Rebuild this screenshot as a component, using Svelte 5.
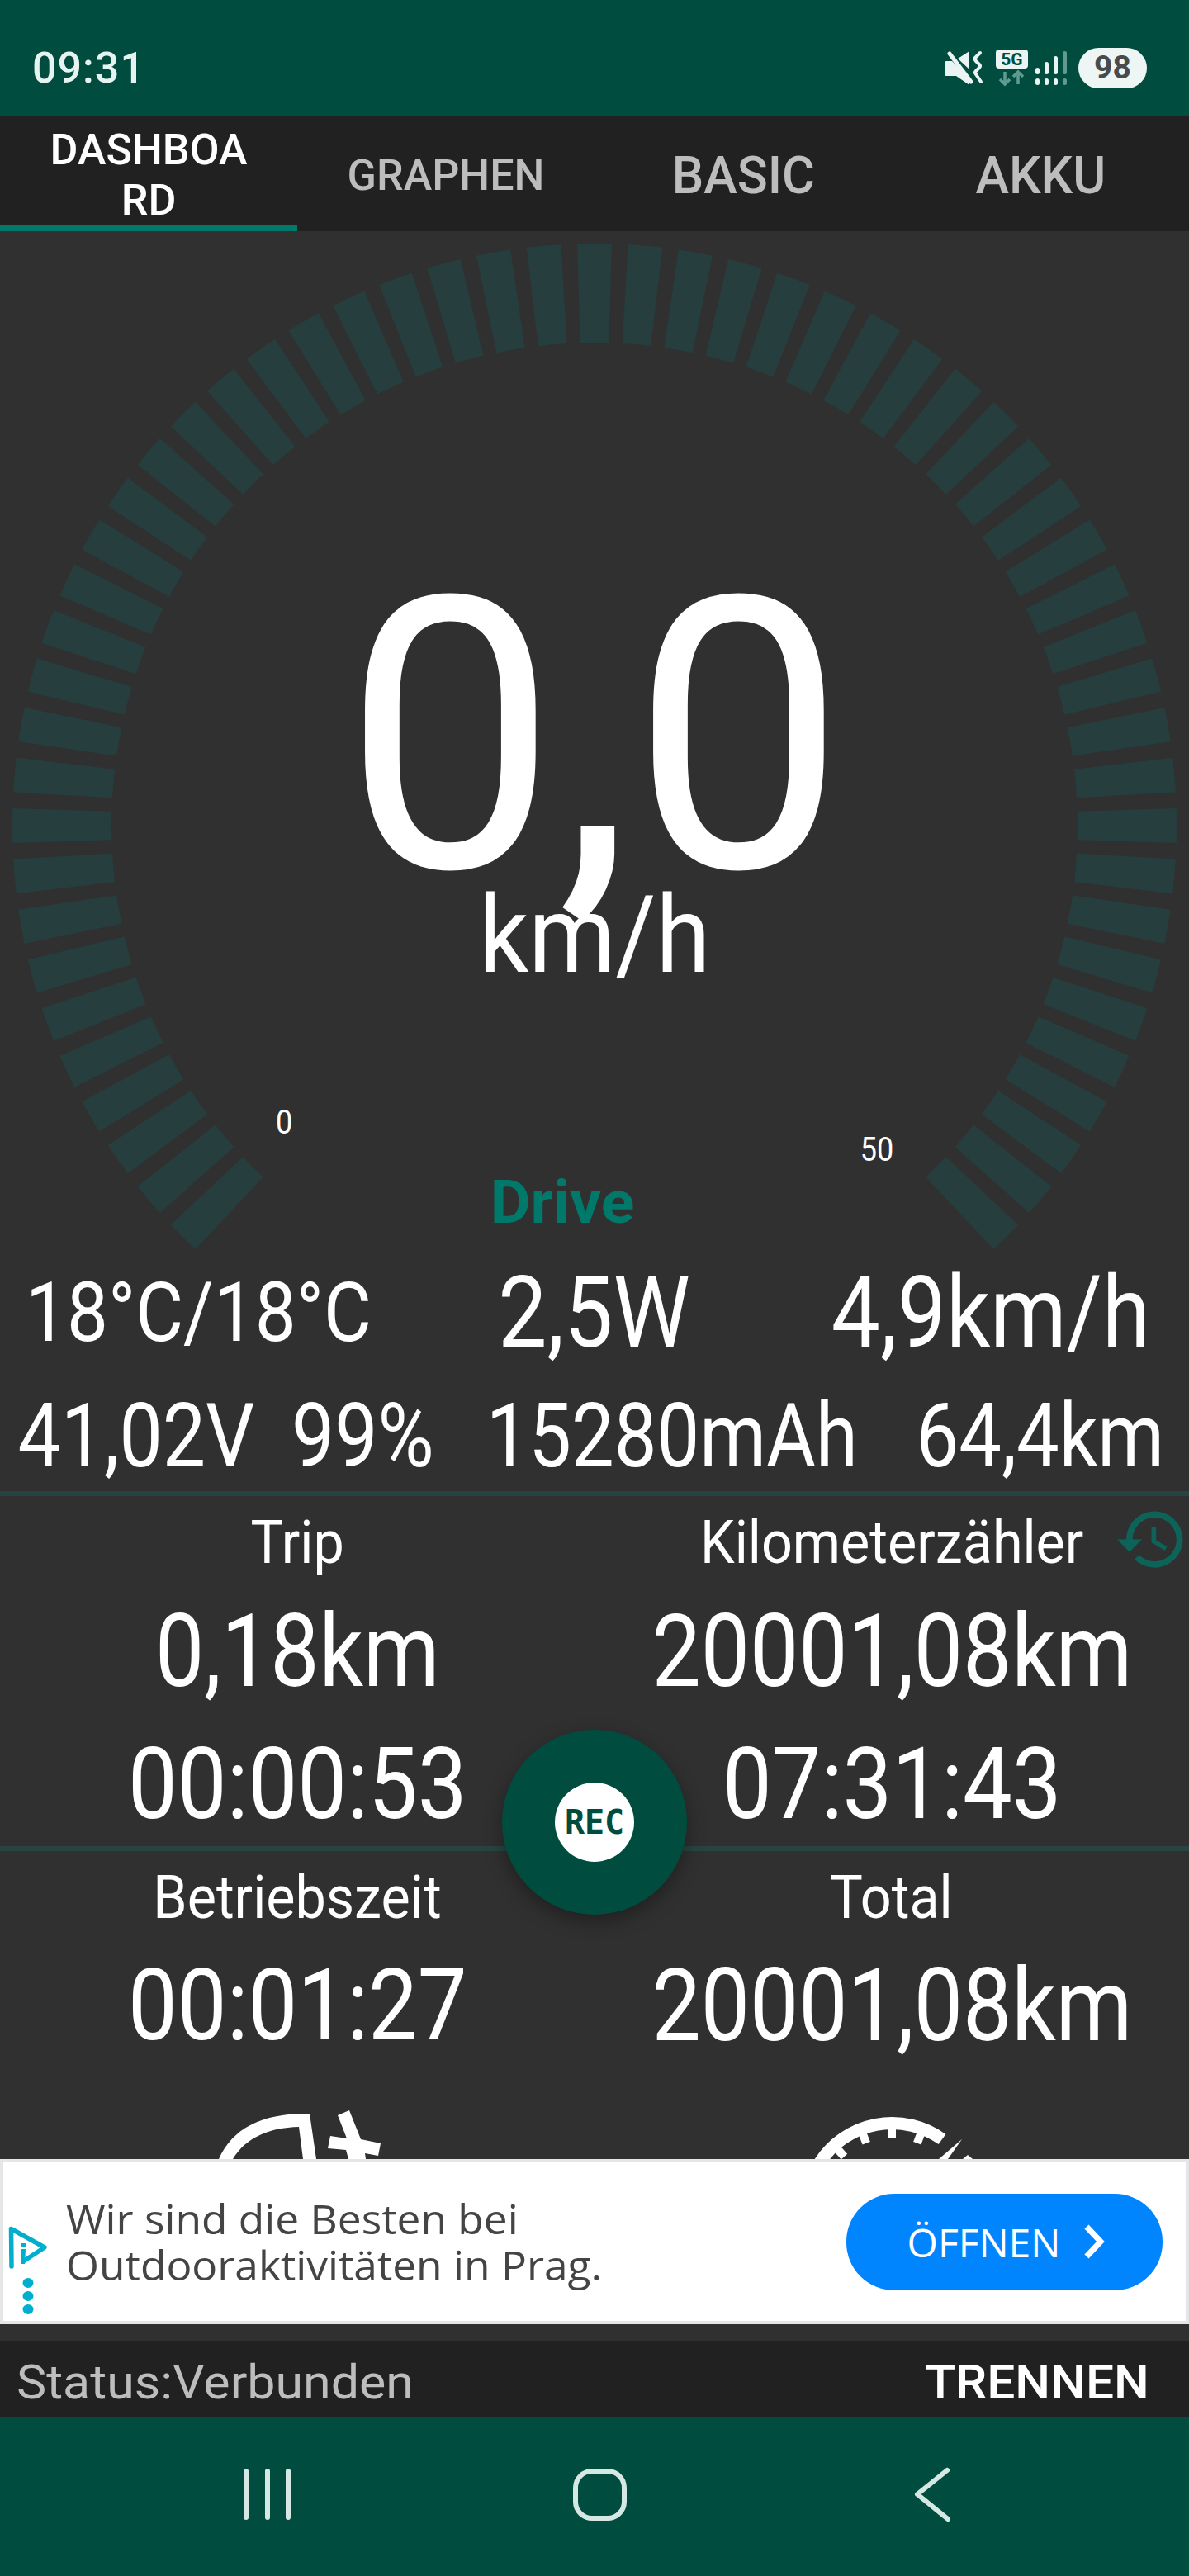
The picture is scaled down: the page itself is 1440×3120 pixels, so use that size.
<script>
  const cx = 720, cy = 720, ro = 705, ri = 585, half = 1.7;
  const pt = (r, a) => {
    const t = (a * Math.PI) / 180;
    return `${(cx + r * Math.sin(t)).toFixed(2)} ${(cy - r * Math.cos(t)).toFixed(2)}`;
  };
  const segs = Array.from({ length: 55 }, (_, i) => {
    const a = -135 + i * 5;
    return `M${pt(ro, a - half)} A${ro} ${ro} 0 0 1 ${pt(ro, a + half)} L${pt(ri, a + half)} A${ri} ${ri} 0 0 0 ${pt(ri, a - half)}Z`;
  });
  const tabs = [
    { lines: ['DASHBOA', 'RD'], cls: 'active small' },
    { lines: ['GRAPHEN'], cls: 'small' },
    { lines: ['BASIC'], cls: 'large' },
    { lines: ['AKKU'], cls: 'large' }
  ];
  const ticks = [-42, -21, 0, 21];
</script>

<div class="page">
  <header class="status">
    <span class="time">09:31</span>
    <div class="sysicons">
      <svg class="icons" viewBox="1140 56 152 52" width="152" height="52" aria-hidden="true">
        <path fill="#eaf5f3" d="M1142 76q0-2 2-2h7l21 21v8l-16-11h-12q-2 0-2-2zM1158 71l14-9v22z"/>
        <path stroke="#004d40" stroke-width="2" fill="none" d="M1144 62l30 36"/>
        <path stroke="#eaf5f3" stroke-width="5" stroke-linecap="round" fill="none" d="M1148 65l26 34"/>
        <path stroke="#eaf5f3" stroke-width="4" stroke-linecap="round" stroke-linejoin="round" fill="none" d="M1185 64l-6 6q-1 2 1 4l4 4q2 2 0 4l-4 4q-2 2 0 4l6 9"/>
        <rect x="1204" y="60" width="39" height="23" rx="4" fill="#eaf5f3"/>
        <text x="1223.5" y="79" class="fiveg">5G</text>
        <path stroke="#5f9b90" stroke-width="3.5" fill="none" d="M1215 87v15m-6-6l6 6 6-6M1231 102v-15m-6 6l6-6 6 6"/>
        <g fill="#eaf5f3">
          <rect x="1252" y="82" width="5" height="8" rx="2.5"/>
          <rect x="1263" y="75" width="5" height="15" rx="2.5"/>
          <rect x="1274" y="68" width="5" height="22" rx="2.5"/>
          <rect x="1252" y="95" width="5" height="8" rx="2.5"/>
          <rect x="1263" y="95" width="5" height="8" rx="2.5"/>
          <rect x="1274" y="95" width="5" height="8" rx="2.5"/>
        </g>
        <g fill="#5f9b90">
          <rect x="1285" y="62" width="5" height="28" rx="2.5"/>
          <rect x="1285" y="95" width="5" height="8" rx="2.5"/>
        </g>
      </svg>
      <span class="pill">98</span>
    </div>
  </header>

  <nav class="tabs">
    {#each tabs as tab}
      <div class="tab {tab.cls}">
        <span class="tabtext">
          {#each tab.lines as line}<span class="tabline">{line}</span>{/each}
        </span>
      </div>
    {/each}
  </nav>

  <main class="main">
    <section class="gauge">
      <svg class="dial" viewBox="0 0 1440 1240" width="1440" height="1240" aria-hidden="true">
        {#each segs as d}<path {d} fill="#273e3e"/>{/each}
      </svg>
      <span class="speed">0,0</span>
      <span class="unit">km/h</span>
      <span class="tick t0">0</span>
      <span class="tick t50">50</span>
      <span class="mode">Drive</span>
    </section>

    <div class="row1">
      <div class="cell"><span class="n s100">18°C/18°C</span></div>
      <div class="cell"><span class="n s121">2,5W</span></div>
      <div class="cell"><span class="n s121">4,9km/h</span></div>
    </div>
    <div class="row2">
      <div class="cell"><span class="n s107">41,02V</span></div>
      <div class="cell"><span class="n s107">99%</span></div>
      <div class="cell"><span class="n s107 tight">15280mAh</span></div>
      <div class="cell"><span class="n s107 tight">64,4km</span></div>
    </div>

    <div class="rule"></div>
    <div class="pair lab">
      <div class="cell"><span class="n label">Trip</span></div>
      <div class="cell hist">
        <span class="n label">Kilometerzähler</span>
        <svg class="history" viewBox="0 0 24 24" width="91" height="91" aria-hidden="true">
          <path fill="#0d6358" d="M13 3c-4.97 0-9 4.03-9 9H1l3.89 3.89.07.14L9 12H6c0-3.87 3.13-7 7-7s7 3.13 7 7-3.13 7-7 7c-1.93 0-3.68-.79-4.94-2.06l-1.42 1.42C8.27 19.99 10.51 21 13 21c4.97 0 9-4.03 9-9s-4.03-9-9-9zm-1 5v5l4.28 2.54.72-1.21-3.5-2.08V8H12z"/>
        </svg>
      </div>
    </div>
    <div class="pair val1">
      <div class="cell"><span class="n s122">0,18km</span></div>
      <div class="cell"><span class="n s122">20001,08km</span></div>
    </div>
    <div class="pair val2">
      <div class="cell"><span class="n s121 clock">00:00:53</span></div>
      <div class="cell"><span class="n s121 clock">07:31:43</span></div>
    </div>
    <div class="rule"></div>
    <div class="pair lab">
      <div class="cell"><span class="n label">Betriebszeit</span></div>
      <div class="cell"><span class="n label">Total</span></div>
    </div>
    <div class="pair val3">
      <div class="cell"><span class="n s121 clock">00:01:27</span></div>
      <div class="cell"><span class="n s122">20001,08km</span></div>
    </div>

    <svg class="peek" viewBox="0 2550 1440 66" width="1440" height="66" aria-hidden="true">
      <path fill="#fff" fill-rule="evenodd" d="M265 2616C282 2578 318 2560 375 2561L383 2616H367L362 2577C325 2578 298 2590 282 2616Z"/>
      <path fill="#fff" d="M409 2563L423 2557L437 2592L461 2597L458 2612L442 2609L443 2616H422L419 2605L397 2603L400 2588L420 2591Z"/>
      <path fill="none" stroke="#fff" stroke-width="15" d="M993 2620A104 104 0 0 1 1141 2592"/>
      <g fill="#fff">
        {#each ticks as t}
          <rect x="1075" y="2578" width="10" height="13" transform="rotate({t} 1080 2677)"/>
        {/each}
        <path d="M1165 2592L1148 2616H1137Z"/>
        <path d="M1172 2611L1178 2616H1166Z"/>
      </g>
    </svg>

    <aside class="ad">
      <svg class="adicon" viewBox="0 0 70 112" width="70" height="112" aria-hidden="true">
        <path fill="none" stroke="#00aecd" stroke-width="5.5" stroke-linejoin="round" stroke-linecap="round" d="M10 49L9.500 3.500 50 26 24 43"/>
        <path fill="#00aecd" d="M22 21h5v5h-5zM22 28h5l-1 18h-5z"/>
        <ellipse cx="30" cy="69" rx="6.500" ry="6" fill="#00aecd"/>
        <ellipse cx="30" cy="85" rx="6.500" ry="6" fill="#00aecd"/>
        <ellipse cx="30" cy="101" rx="6.500" ry="6" fill="#00aecd"/>
      </svg>
      <p class="adtext"><span class="adline">Wir sind die Besten bei</span><span class="adline">Outdooraktivitäten in Prag.</span></p>
      <div class="open">
        <span class="opentext">ÖFFNEN</span>
        <svg viewBox="0 0 30 44" width="30" height="44" aria-hidden="true">
          <path fill="none" stroke="#fff" stroke-width="7" d="M6 4l17 18L6 40"/>
        </svg>
      </div>
    </aside>
  </main>

  <footer class="foot">
    <span class="stat">Status:Verbunden</span>
    <span class="stop">TRENNEN</span>
  </footer>

  <nav class="sysnav">
    <svg viewBox="0 2928 1440 192" width="1440" height="192" aria-hidden="true">
      <g fill="none" stroke="#d5e8e3" stroke-width="6" stroke-linecap="round" stroke-linejoin="round">
        <path d="M298 2993v56M324 2993v56M349 2993v56"/>
        <rect x="697" y="2993" width="59" height="57" rx="20"/>
        <path d="M1147 2992L1111 3021L1148 3051"/>
      </g>
    </svg>
  </nav>

  <button class="fab" aria-label="REC"><span class="rec"><span class="rectext">REC</span></span></button>
</div>

<style>
  :global(body) { margin: 0; background: #303030; }
  .page {
    position: relative;
    width: 1440px;
    height: 3120px;
    display: flex;
    flex-direction: column;
    overflow: hidden;
    font-family: Roboto, "Liberation Sans", sans-serif;
    color: #fff;
  }

  .status {
    height: 140px;
    flex: none;
    box-sizing: border-box;
    padding: 0 51px 0 39px;
    background: #004d40;
    display: flex;
    align-items: center;
    justify-content: space-between;
  }
  .time {
    font-size: 52px;
    font-weight: 500;
    line-height: 60px;
    margin-top: 26px;
    color: #e6f3f1;
    letter-spacing: 1px;
  }
  .sysicons { display: flex; align-items: center; gap: 12px; margin-top: 24px; }
  .icons { display: block; }
  .fiveg {
    font-family: Roboto, sans-serif;
    font-size: 21px;
    font-weight: 700;
    fill: #004d40;
    text-anchor: middle;
  }
  .pill {
    width: 83px;
    height: 49px;
    border-radius: 25px;
    background: #eef6f5;
    color: #4a4a4a;
    font-size: 39px;
    font-weight: 700;
    line-height: 49px;
    text-align: center;
  }

  .tabs { height: 140px; flex: none; background: #212121; display: flex; }
  .tab {
    width: 360px;
    box-sizing: border-box;
    padding-top: 12px;
    border-bottom: 8px solid transparent;
    display: flex;
    align-items: center;
    justify-content: center;
    color: #bdbdbd;
    font-weight: 500;
  }
  .tab.active { color: #fff; border-bottom-color: #00796b; }
  .tabtext { display: block; text-align: center; }
  .tabline { display: block; line-height: 61px; white-space: nowrap; }
  .small { font-size: 52px; }
  .large { font-size: 63px; }
  .large .tabtext { transform: scaleX(0.97); }

  .main {
    flex: 1;
    min-height: 0;
    background: #303030;
    display: flex;
    flex-direction: column;
  }

  .gauge { position: relative; height: 1240px; flex: none; }
  .dial { display: block; }
  .speed, .unit, .tick, .mode {
    position: absolute;
    left: 0;
    width: 100%;
    text-align: center;
    white-space: nowrap;
  }
  .speed { top: 383px; font-size: 460px; line-height: 460px; }
  .unit { top: 788px; font-size: 130px; line-height: 130px; transform: scaleX(0.92); }
  .tick { font-size: 40px; line-height: 40px; width: 100px; transform: scaleX(0.9); }
  .t0 { left: 294px; top: 1060px; }
  .t50 { left: 1012px; top: 1093px; }
  .mode {
    left: 0;
    width: 1362px;
    top: 1140px;
    font-size: 73px;
    line-height: 73px;
    font-weight: 700;
    color: #00796b;
    transform: scaleX(1.03);
  }

  .cell { display: flex; justify-content: center; position: relative; min-width: 0; }
  .n { display: block; white-space: nowrap; transform: scaleX(0.87); flex: none; }
  .n.tight { transform: scaleX(0.86); }
  .n.clock { transform: scaleX(0.88); }
  .s100 { font-size: 100px; transform: scaleX(0.89); }
  .s107 { font-size: 107px; }
  .s121 { font-size: 121px; }
  .s122 { font-size: 122px; transform: scaleX(0.865); }
  .label { font-size: 73px; transform: scaleX(0.91); }

  .row1 { display: grid; grid-template-columns: repeat(3, 480px); height: 140px; line-height: 140px; flex: none; }
  .row2 {
    display: grid;
    grid-template-columns: 330px 218px 532px 360px;
    height: 132px;
    line-height: 132px;
    margin-top: 14px;
    flex: none;
  }
  .rule { height: 6px; background: #284442; flex: none; }
  .pair { display: grid; grid-template-columns: 720px 720px; flex: none; }
  .lab { height: 112px; line-height: 112px; }
  .val1 { height: 154px; line-height: 154px; }
  .val2 { height: 149px; line-height: 149px; margin-top: 9px; }
  .val3 { height: 151px; line-height: 151px; }
  .history { position: absolute; left: 629px; top: 7px; }

  .peek { display: block; margin-top: 44px; flex: none; }

  .ad {
    height: 200px;
    flex: none;
    box-sizing: border-box;
    border: 4px solid #e5e6e8;
    background: #fff;
    display: flex;
    align-items: center;
    padding-right: 28px;
  }
  .adicon { flex: none; margin: 77px 6px 0 0; align-self: flex-start; display: block; }
  .adtext {
    margin: 0;
    flex: 1;
    font-family: "Open Sans", sans-serif;
    font-size: 49px;
    color: #444;
  }
  .adline { display: block; line-height: 56px; white-space: nowrap; transform: scaleX(1.05); transform-origin: left; }
  .open {
    flex: none;
    width: 383px;
    height: 117px;
    box-sizing: border-box;
    padding-left: 6px;
    border-radius: 58px;
    background: #0185fe;
    display: flex;
    align-items: center;
    justify-content: center;
    gap: 26px;
  }
  .opentext { font-family: "Open Sans", sans-serif; font-size: 48px; color: #fff; }

  .foot {
    height: 93px;
    flex: none;
    box-sizing: border-box;
    padding: 6px 48px 0 20px;
    background: #212121;
    display: flex;
    align-items: center;
    justify-content: space-between;
    font-size: 58px;
  }
  .stat { color: #bdbdbd; transform: scaleX(1.05); transform-origin: left; }
  .stop { font-weight: 500; transform: scaleX(1.04); transform-origin: right; }

  .sysnav { height: 192px; flex: none; background: #004d40; }
  .sysnav svg { display: block; }

  .fab {
    position: absolute;
    left: 608px;
    top: 2095px;
    width: 224px;
    height: 224px;
    padding: 0;
    border: 0;
    border-radius: 50%;
    background: #004d40;
    box-shadow: 0 8px 22px rgba(0, 0, 0, 0.35);
    display: flex;
    align-items: center;
    justify-content: center;
  }
  .rec {
    width: 96px;
    height: 96px;
    border-radius: 50%;
    background: #fff;
    display: flex;
    align-items: center;
    justify-content: center;
  }
  .rectext {
    font-family: "DejaVu Sans Mono", monospace;
    font-size: 40px;
    font-weight: 700;
    color: #004d40;
  }
</style>
